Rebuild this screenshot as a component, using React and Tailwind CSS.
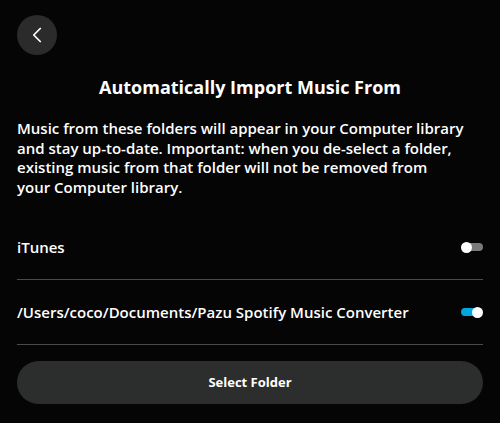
import { ChevronLeft } from "lucide-react";

function Toggle({ on }) {
  return (
    <div className="relative h-[11px] w-[22px]">
      <div
        className={`absolute top-[1.5px] h-[8px] rounded-full ${
          on ? "left-0 w-[16px] bg-[#00a8e1]" : "right-0 w-[17px] bg-[#7a7a7a]"
        }`}
      />
      <div
        className={`absolute top-0 h-[11px] w-[11px] rounded-full bg-white ${on ? "right-0" : "left-0"}`}
      />
    </div>
  );
}

function SourceRow({ label, on }) {
  return (
    <div className="flex h-[65px] items-center justify-between border-b border-[#4a4a4a]">
      <span className="text-[15px] font-semibold text-white">{label}</span>
      <Toggle on={on} />
    </div>
  );
}

export default function App() {
  return (
    <div
      className="h-[423px] w-[500px] overflow-hidden bg-[#050505] px-[17px] pt-[15px] text-white"
      style={{ fontFamily: "'Open Sans', sans-serif" }}
    >
      <button className="flex h-[40px] w-[40px] items-center justify-center rounded-full bg-[#2b2b2b]">
        <ChevronLeft className="h-[26px] w-[26px] text-white" strokeWidth={1.6} />
      </button>
      <h1 className="mt-[20px] text-center text-[18px] font-bold leading-[24px]">
        Automatically Import Music From
      </h1>
      <p className="mt-[20px] text-[15px] font-semibold leading-[19.5px]">
        Music from these folders will appear in your Computer library and stay up-to-date. Important:
        when you de-select a folder, existing music from that folder will not be removed from
        <br />
        your Computer library.
      </p>
      <div className="mt-[18px]">
        <SourceRow label="iTunes" on={false} />
        <SourceRow label="/Users/coco/Documents/Pazu Spotify Music Converter" on />
      </div>
      <button className="mt-[16px] flex h-[43px] w-full items-center justify-center rounded-full bg-[#2c2d2d] text-[13px] font-bold text-white">
        Select Folder
      </button>
    </div>
  );
}
